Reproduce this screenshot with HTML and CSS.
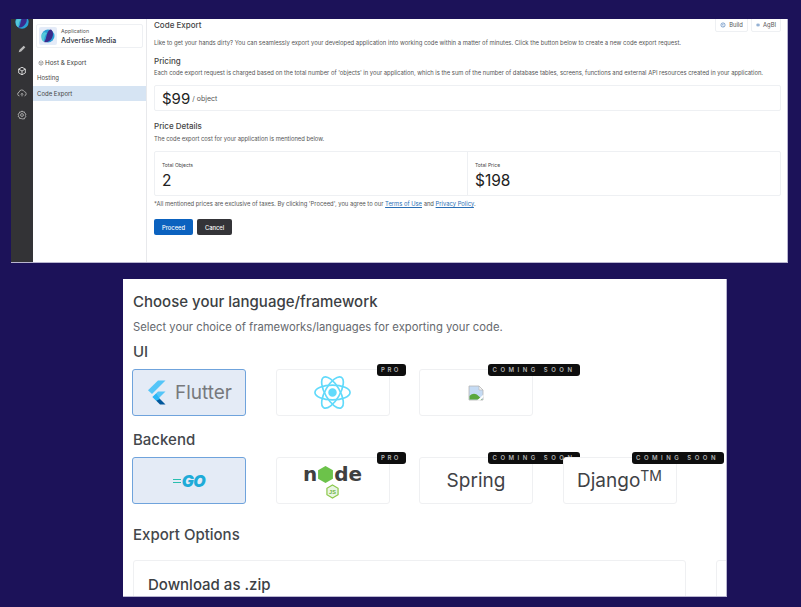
FILE: index.html
```html
<!DOCTYPE html>
<html lang="en">
<head>
<meta charset="utf-8">
<title>Code Export</title>
<link rel="stylesheet" href="styles.css">
</head>
<body>
<section class="app">
  <nav class="rail">
    <svg class="rail-logo" viewBox="0 0 18 18"><circle cx="9" cy="9" r="7.500" fill="#2a9fd6"/><path d="M12 2c3 2 3 6 1 9s-5 5-8 4c2-2 2-5 3-8s2-5 4-5z" fill="#3a2a8c"/><path d="M8 6c-2 2-3 5-3 9-2-1-3-3-3-6s3-5 6-3z" fill="#55c8d8"/></svg>
    <svg class="rail-icon" viewBox="0 0 12 12"><path d="M2 10l1-3 5-5 2 2-5 5z" fill="#bbb"/></svg>
    <svg class="rail-icon" viewBox="0 0 12 12" fill="none" stroke="#eee" stroke-width="1"><path d="M6 1.500l4 2.200v4.600l-4 2.200-4-2.200V3.700z"/><path d="M2 3.700l4 2.300 4-2.300M6 6v4.500"/></svg>
    <svg class="rail-icon" viewBox="0 0 12 12" fill="none" stroke="#bbb" stroke-width="1"><path d="M3 9.500H2.800a2.300 2.300 0 0 1-.3-4.500 3.300 3.300 0 0 1 6.300-.6 2.600 2.600 0 0 1 .2 5.100H9M6 10V6.500M4.600 7.800L6 6.400l1.400 1.400"/></svg>
    <svg class="rail-icon" viewBox="0 0 12 12" fill="none" stroke="#bbb" stroke-width="1"><path d="M6 1l1 1.400 1.800-.2.500 1.700 1.500 1L10 6.500l.8 1.500-1.500 1-.5 1.700-1.800-.2L6 11l-1-1-1.800.2-.5-1.700-1.500-1L2 6.500l-.8-1.500 1.500-1 .5-1.700 1.800.2z"/><circle cx="6" cy="6" r="1.700"/></svg>
  </nav>
  <aside class="side">
    <div class="app-card">
      <div class="app-logo">
        <svg viewBox="0 0 18 18"><circle cx="9" cy="9" r="6.500" fill="#2a9fd6"/><path d="M12 2.500c2.500 2 2.500 5.500 1 8.500s-5 5-8 4c2-2 2-5 3-8s2-4.500 4-4.500z" fill="#3a2a8c"/><path d="M8 6c-2 2-3 5-3 9-2-1-3-3-2.500-6S5 4 8 6z" fill="#55c8d8"/></svg>
      </div>
      <div class="app-text">
        <span class="app-label">Application</span>
        <span class="app-name">Advertise Media</span>
      </div>
    </div>
    <div class="side-head">
      <svg viewBox="0 0 12 12" fill="none" stroke="#666" stroke-width="1"><path d="M6 1.500l4 2.200v4.600l-4 2.200-4-2.200V3.700z"/><path d="M2 3.700l4 2.300 4-2.300M6 6v4.500"/></svg>
      Host &amp; Export
    </div>
    <div class="side-item">Hosting</div>
    <div class="side-item active">Code Export</div>
  </aside>
  <main class="main">
    <div class="top-tabs">
      <span class="tab"><svg viewBox="0 0 10 10" fill="none" stroke="#3b6fb0" stroke-width="1"><circle cx="5" cy="5" r="3.500"/><path d="M6 3L4 5l2 2"/></svg>Build</span>
      <span class="tab"><svg viewBox="0 0 10 10" fill="none" stroke="#3b6fb0" stroke-width="1"><path d="M2 2.500h6v2H2zM2 5.500h6v2H2z"/></svg>AgBI</span>
    </div>
    <h2 class="title">Code Export</h2>
    <p class="para intro">Like to get your hands dirty? You can seamlessly export your developed application into working code within a matter of minutes. Click the button below to create a new code export request.</p>
    <h3 class="title pricing">Pricing</h3>
    <p class="para pricing-text">Each code export request is charged based on the total number of 'objects' in your application, which is the sum of the number of database tables, screens, functions and external API resources created in your application.</p>
    <div class="price-box"><span class="price">$99</span><span class="per">/ object</span></div>
    <h3 class="title details">Price Details</h3>
    <p class="para details-text">The code export cost for your application is mentioned below.</p>
    <div class="totals">
      <div class="total"><span class="total-label">Total Objects</span><span class="total-value">2</span></div>
      <div class="total"><span class="total-label">Total Price</span><span class="total-value">$198</span></div>
    </div>
    <p class="para note">*All mentioned prices are exclusive of taxes. By clicking 'Proceed', you agree to our <a href="#">Terms of Use</a> and <a href="#">Privacy Policy</a>.</p>
    <div class="actions">
      <button class="btn primary">Proceed</button>
      <button class="btn dark">Cancel</button>
    </div>
  </main>
</section>

<section class="chooser">
  <h2 class="c-title">Choose your language/framework</h2>
  <p class="c-sub">Select your choice of frameworks/languages for exporting your code.</p>
  <h3 class="c-head">UI</h3>
  <div class="cards">
    <div class="card selected">
      <svg class="flutter-logo" viewBox="0 0 20 24"><path d="M12 0h7.500L6 13.500 2 9.800z" fill="#54c5f8"/><path d="M19.500 11H12L6.500 16.500l3.800 3.700z" fill="#54c5f8"/><path d="M10.300 20.200L14 24h5.500l-5.500-5.600-3.700-1.800z" fill="#01579b"/><path d="M6.500 16.500l3.700-3.600 3.800 5.500-3.700 1.800z" fill="#29b6f6"/></svg>
      <span class="flutter-word">Flutter</span>
    </div>
    <div class="card">
      <svg class="react-logo" viewBox="0 0 40 40" fill="none" stroke="#61dafb" stroke-width="1.700"><circle cx="20" cy="20" r="3.500" fill="#61dafb"/><ellipse cx="20" cy="20" rx="18" ry="7.500"/><ellipse cx="20" cy="20" rx="18" ry="7.500" transform="rotate(60 20 20)"/><ellipse cx="20" cy="20" rx="18" ry="7.500" transform="rotate(120 20 20)"/></svg>
      <span class="badge badge-pro">PRO</span>
    </div>
    <div class="card">
      <svg class="broken" viewBox="0 0 16 16"><path d="M1 1h10l4 4v10H1z" fill="#c5dbf4" stroke="#b5b5b5" stroke-width=".8"/><path d="M11 1v4h4z" fill="#f4f4f4" stroke="#b5b5b5" stroke-width=".6"/><path d="M1.500 14.600V11c3-3 6-3 9 0l4 3.600z" fill="#5aa83c"/><path d="M9 15.500l6.500-6v2.500l-3.500 3.500z" fill="#fff"/></svg>
      <span class="badge badge-soon">COMING SOON</span>
    </div>
  </div>
  <h3 class="c-head backend">Backend</h3>
  <div class="cards">
    <div class="card selected"><span class="go-lines"></span><span class="go-word">GO</span></div>
    <div class="card">
      <div class="node-logo">
        <div class="node-word">n<svg class="node-hex" viewBox="0 0 14 16"><path d="M7 0l7 4v8l-7 4-7-4V4z" fill="#6cc24a"/></svg>de</div>
        <svg class="node-js" viewBox="0 0 14 16"><path d="M7 1l6 3.500v7L7 15l-6-3.500v-7z" fill="#e9f5e3" stroke="#8cc84b" stroke-width="1.300"/><text x="7" y="10.500" text-anchor="middle" font-size="6" fill="#6cb33f" font-family="Liberation Sans" font-weight="700">JS</text></svg>
      </div>
      <span class="badge badge-pro">PRO</span>
    </div>
    <div class="card"><span class="card-word">Spring</span><span class="badge badge-soon">COMING SOON</span></div>
    <div class="card"><span class="card-word">Django<sup>TM</sup></span><span class="badge badge-soon">COMING SOON</span></div>
  </div>
  <h3 class="c-head options">Export Options</h3>
  <div class="options-row">
    <div class="option"><span class="option-title">Download as .zip</span></div>
    <div class="option next"></div>
  </div>
</section>
</body>
</html>
```

FILE: styles.css
```css
* { box-sizing: border-box; }
html, body { margin: 0; height: 100%; }
body {
  background: #1c1259;
  padding-top: 19px;
  overflow: hidden;
  font-family: Inter, "Liberation Sans", sans-serif;
  color: #3a3d42;
}
h2, h3, p { margin: 0; font-weight: 500; }

/* top window */
.app {
  display: flex;
  width: 777px;
  height: 244px;
  margin-left: 11px;
  background: #fff;
  border-right: 1px solid #b9b6d0;
  border-bottom: 1px solid #b9b6d0;
  overflow: hidden;
}
.rail {
  flex: 0 0 22px;
  background: #333336;
  display: flex;
  flex-direction: column;
  align-items: center;
  gap: 12px;
  padding-top: 25px;
  position: relative;
}
.rail-logo { position: absolute; top: -5px; left: 3px; width: 16px; height: 16px; }
.rail-icon { width: 10px; height: 10px; display: block; }
.side {
  flex: 0 0 114px;
  border-right: 1px solid #e8e9ec;
  padding-top: 5px;
}
.app-card {
  display: flex;
  align-items: center;
  gap: 4px;
  width: 107px;
  height: 24px;
  margin-left: 3px;
  padding: 2px;
  border: 1px solid #eef0f3;
  border-radius: 2px;
}
.app-logo { width: 18px; height: 18px; background: #e4ebf8; border-radius: 2px; }
.app-logo svg { width: 18px; height: 18px; display: block; }
.app-text { display: flex; flex-direction: column; gap: 2px; }
.app-label { font-size: 5.300px; color: #555; }
.app-name { font-size: 7.100px; color: #333a46; font-weight: 500; }
.side-head {
  display: flex;
  align-items: center;
  gap: 1px;
  margin: 10px 0 0 5px;
  font-size: 6.400px;
  line-height: 10px;
  color: #444;
}
.side-head svg { width: 6px; height: 6px; }
.side-item {
  height: 15px;
  padding-left: 4px;
  margin-top: 2px;
  font-size: 6px;
  line-height: 15px;
  color: #444;
}
.active { background: #d6e4f3; margin-top: 1px; }

.main {
  flex: 1;
  padding: 1px 6px 0 7px;
  position: relative;
  min-width: 0;
}
.top-tabs { position: absolute; top: -2px; right: 6px; display: flex; gap: 3px; }
.tab {
  display: flex;
  align-items: center;
  justify-content: center;
  gap: 3px;
  height: 15px;
  padding: 0 4px;
  font-size: 5.800px;
  color: #555;
  border: 1px solid #eef0f3;
  border-radius: 2px;
}
.tab:first-child { width: 33px; }
.tab:last-child { width: 30px; }
.tab svg { width: 6px; height: 6px; }
.title { font-size: 8px; line-height: 10px; color: #444; font-weight: 500; }
.para { font-size: 5.840px; line-height: 8px; color: #555; font-weight: 400; white-space: nowrap; }
.intro { margin-top: 9px; font-size: 5.900px; }
.pricing { margin-top: 9px; }
.pricing-text { margin-top: 3px; }
.price-box {
  display: flex;
  align-items: center;
  gap: 2px;
  height: 26px;
  margin-top: 8px;
  padding-left: 7px;
  border: 1px solid #eef0f3;
  border-radius: 2px;
}
.price { font-size: 15px; color: #222; }
.per { font-size: 7px; color: #555; }
.details { margin-top: 10px; }
.details-text { margin-top: 4px; }
.totals {
  display: grid;
  grid-template-columns: 312px 1fr;
  height: 45px;
  margin-top: 8px;
  border: 1px solid #eef0f3;
  border-radius: 2px;
}
.total { display: flex; flex-direction: column; gap: 3px; padding: 10px 0 0 7px; }
.total + .total { border-left: 1px solid #eef0f3; }
.total-label { font-size: 5px; line-height: 7px; color: #444; }
.total-value { font-size: 15.500px; line-height: 18px; color: #222; }
.note { margin-top: 4px; }
.note a { color: #2a6fb5; }
.actions { display: flex; gap: 4px; margin-top: 11px; }
.btn {
  height: 16px;
  padding: 0;
  border: 0;
  border-radius: 2px;
  font: 500 5.800px Inter, "Liberation Sans", sans-serif;
  color: #fff;
}
.primary { width: 39px; background: #0b62bf; }
.dark { width: 35px; background: #343438; }

/* lower window */
.chooser {
  width: 604px;
  height: 318px;
  margin: 16px 0 0 123px;
  padding: 13px 0 0 10px;
  background: #fff;
  border-right: 1px solid #b9b6d0;
  border-bottom: 1px solid #b9b6d0;
  overflow: hidden;
}
.c-title { font-size: 15px; line-height: 20px; color: #3c3f44; font-weight: 500; }
.c-sub { margin-top: 8px; font-size: 11.260px; line-height: 14px; color: #66696e; font-weight: 400; }
.c-head { font-size: 15px; line-height: 18px; color: #44474c; font-weight: 500; }
.c-sub + .c-head { margin-top: 9px; }
.chooser .backend { margin-top: 15px; }
.cards { display: flex; gap: 29.500px; margin-top: 8px; }
.card {
  position: relative;
  flex: 0 0 114px;
  height: 47px;
  display: flex;
  align-items: center;
  justify-content: center;
  background: #fff;
  border: 1px solid #eff0f2;
  border-radius: 3px;
}
.card:first-child { margin-left: -1px; }
.selected { background: #e4ebf6; border-color: #6fa3dc; }
.flutter-logo { width: 20px; height: 25px; margin-right: 9px; }
.flutter-word { font-size: 19px; color: #77797d; }
.react-logo { width: 39px; height: 39px; }
.broken { width: 16px; height: 16px; }
.badge {
  position: absolute;
  top: -6px;
  height: 12px;
  display: flex;
  align-items: center;
  justify-content: center;
  background: #0e0e0e;
  border-radius: 3px;
  color: #b5b5b5;
  font-size: 6px;
  font-weight: 600;
  line-height: 1;
  white-space: nowrap;
}
.badge-pro { left: 100px; width: 29px; letter-spacing: 2.500px; }
.badge-soon { left: 68px; width: 92px; letter-spacing: 3.500px; }
.go-lines {
  width: 8px;
  height: 4px;
  margin-right: 1px;
  border-top: 1px solid #29beb0;
  border-bottom: 1px solid #29beb0;
}
.go-word { font-size: 16px; font-weight: 900; font-style: italic; color: #1eabd8; letter-spacing: -.5px; }
.node-logo { display: flex; flex-direction: column; align-items: center; margin-top: 1px; }
.node-word {
  display: flex;
  align-items: center;
  height: 22px;
  font-family: "DejaVu Sans", sans-serif;
  font-size: 20px;
  font-weight: 700;
  color: #404040;
}
.node-hex { width: 15px; height: 17px; margin: 0 1px; }
.node-js { width: 13px; height: 15px; margin-top: -1px; }
.card-word { font-size: 19px; color: #3f4246; }
.card-word sup { font-size: 14px; line-height: 0; vertical-align: 6px; }
.chooser .options { margin-top: 22px; }
.options-row { display: flex; gap: 30px; margin-top: 16px; }
.option {
  flex: 0 0 553px;
  height: 60px;
  padding: 13px 14px;
  border: 1px solid #eff0f2;
  border-radius: 3px;
}
.option-title { font-size: 15px; line-height: 20px; color: #3c3f44; font-weight: 500; }
```
